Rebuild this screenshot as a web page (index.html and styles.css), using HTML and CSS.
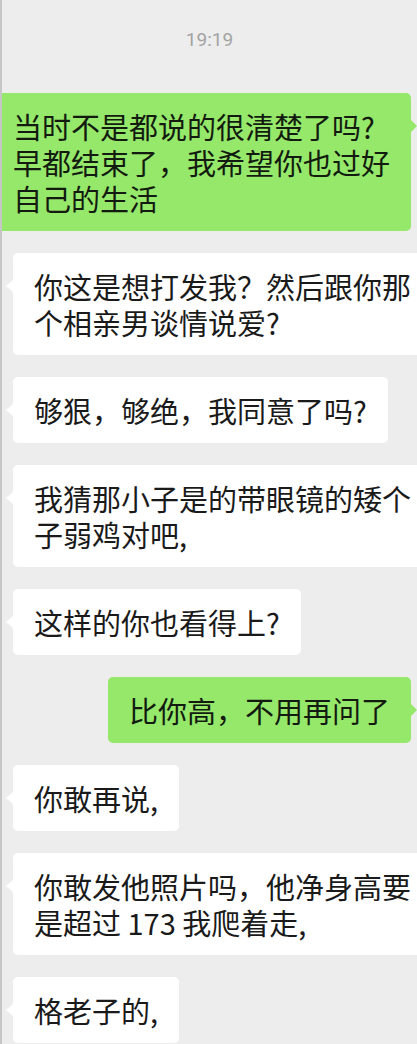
FILE: index.html
```html
<!DOCTYPE html>
<html lang="zh-CN">
<head>
    <meta charset="UTF-8">
    <meta name="viewport" content="width=device-width, initial-scale=1.0">
    <title>聊天</title>
    <link rel="stylesheet" href="styles.css">
</head>
<body>
    <div class="tela">
        <div class="hora">19:19</div>
        <div class="mensagens">
            <div class="linha eu">
                <div class="balao">当时不是都说的很清楚了吗?<br>早都结束了，我希望你也过好<br>自己的生活</div>
            </div>
            <div class="linha ele">
                <div class="balao">你这是想打发我？然后跟你那<br>个相亲男谈情说爱?</div>
            </div>
            <div class="linha ele">
                <div class="balao">够狠，够绝，我同意了吗?</div>
            </div>
            <div class="linha ele">
                <div class="balao">我猜那小子是的带眼镜的矮个<br>子弱鸡对吧,</div>
            </div>
            <div class="linha ele">
                <div class="balao">这样的你也看得上?</div>
            </div>
            <div class="linha eu">
                <div class="balao">比你高，不用再问了</div>
            </div>
            <div class="linha ele">
                <div class="balao">你敢再说,</div>
            </div>
            <div class="linha ele">
                <div class="balao">你敢发他照片吗，他净身高要<br>是超过 173 我爬着走,</div>
            </div>
            <div class="linha ele">
                <div class="balao">格老子的,</div>
            </div>
        </div>
    </div>
</body>
</html>
```

FILE: styles.css
```css
body{
    margin: 0;
    background-color: #ededed;
    font-family: "Noto Sans CJK SC", "Noto Sans", sans-serif;
}
div.tela{
    height: 1044px;
    overflow: hidden;
    background-color: #ededed;
    border-left: 2px solid #c6c6c6;
}
div.hora{
    padding-top: 28px;
    font-family: Roboto, "Noto Sans", sans-serif;
    font-size: 19px;
    line-height: 24px;
    color: #a3a3a3;
    text-align: center;
}
div.mensagens{
    display: flex;
    flex-direction: column;
    gap: 22px;
    margin-top: 41px;
}
div.linha{
    display: flex;
}
div.linha.eu{
    justify-content: flex-end;
    padding-right: 6px;
}
div.linha.ele{
    justify-content: flex-start;
    padding-left: 11px;
}
div.balao{
    position: relative;
    flex-shrink: 0;
    white-space: nowrap;
    font-size: 29px;
    line-height: 36px;
    padding: 15px 21px;
    border-radius: 5px;
    color: #1a1a1a;
}
div.eu div.balao{
    background-color: #95e86a;
    color: #131a0f;
}
div.ele div.balao{
    background-color: #fff;
}
div.balao::before{
    content: '';
    position: absolute;
    top: 27px;
    border-top: 6px solid transparent;
    border-bottom: 6px solid transparent;
}
div.eu div.balao::before{
    right: -6px;
    border-left: 6px solid #95e86a;
}
div.ele div.balao::before{
    left: -7px;
    border-right: 7px solid #fff;
}
```
